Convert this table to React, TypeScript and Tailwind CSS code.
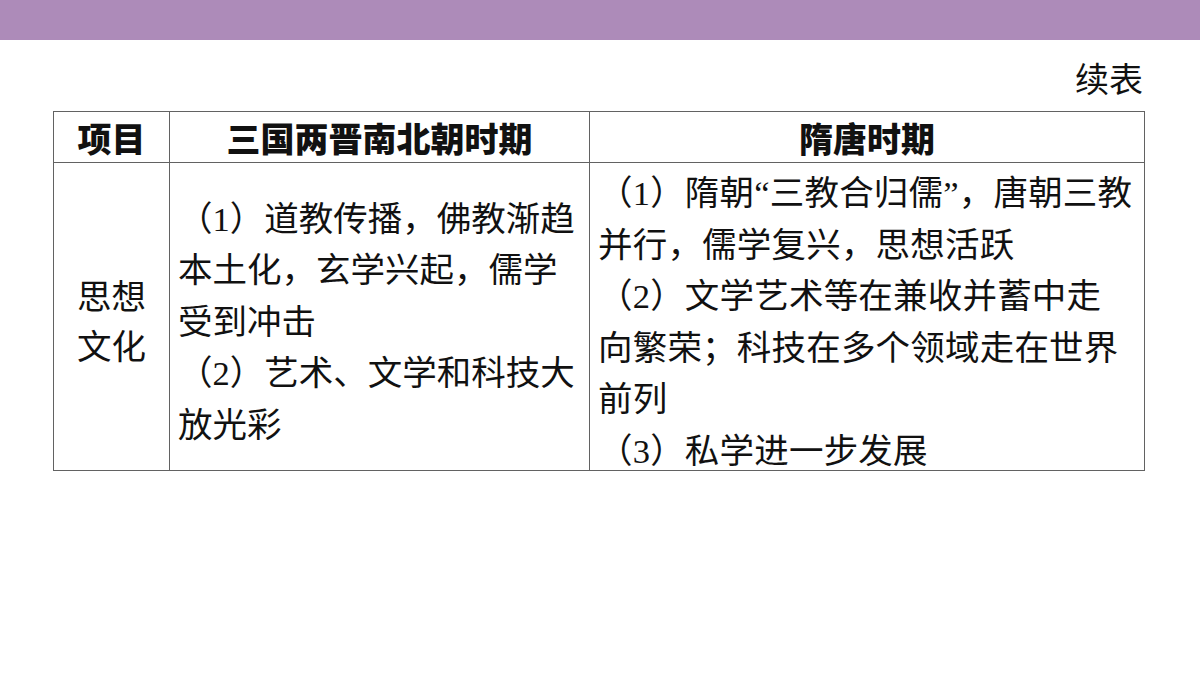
const cjk = {
  fontFamily: '"Liberation Serif", "Noto Sans CJK SC", sans-serif',
};

const leftLines = [
  "（1）道教传播，佛教渐趋",
  "本土化，玄学兴起，儒学",
  "受到冲击",
  "（2）艺术、文学和科技大",
  "放光彩",
];

const rightLines = [
  "（1）隋朝“三教合归儒”，唐朝三教",
  "并行，儒学复兴，思想活跃",
  "（2）文学艺术等在兼收并蓄中走",
  "向繁荣；科技在多个领域走在世界",
  "前列",
  "（3）私学进一步发展",
];

function Lines({ lines }: { lines: string[] }) {
  return (
    <div className="flex flex-col">
      {lines.map((l, i) => (
        <div key={i} className="whitespace-nowrap leading-[51.5px]">
          {l}
        </div>
      ))}
    </div>
  );
}

export default function App() {
  return (
    <div className="w-[1200px] h-[675px] bg-white text-[#111]" style={cjk}>
      <div className="h-10 bg-[#ad8bb9]" />
      <div className="mx-[53px] w-[1091px]">
        <div className="h-[71px] pt-[10px] text-right text-[34px] leading-[61px] pr-[1px]">
          续表
        </div>
        <table className="w-[1091px] table-fixed border-collapse text-[34.5px]">
          <colgroup>
            <col className="w-[116px]" />
            <col className="w-[420px]" />
            <col className="w-[555px]" />
          </colgroup>
          <thead>
            <tr className="h-[51px]">
              {["项目", "三国两晋南北朝时期", "隋唐时期"].map((h) => (
                <th
                  key={h}
                  className="border-[1.5px] border-[#626262] p-0 pt-[7px] text-center align-middle font-black text-[34px] leading-[42px]"
                >
                  {h}
                </th>
              ))}
            </tr>
          </thead>
          <tbody>
            <tr className="h-[308px]">
              <td className="border-[1.5px] border-[#626262] p-0 text-center align-middle">
                <div className="leading-[50px] pt-[10px]">
                  思想
                  <br />
                  文化
                </div>
              </td>
              <td className="border-[1.5px] border-[#626262] px-2 py-0 align-middle">
                <div className="pt-[12px]">
                  <Lines lines={leftLines} />
                </div>
              </td>
              <td className="border-[1.5px] border-[#626262] px-2 py-0 align-middle">
                <div className="mt-[4px] -mb-[8px] tracking-[0.2px]">
                  <Lines lines={rightLines} />
                </div>
              </td>
            </tr>
          </tbody>
        </table>
      </div>
    </div>
  );
}
